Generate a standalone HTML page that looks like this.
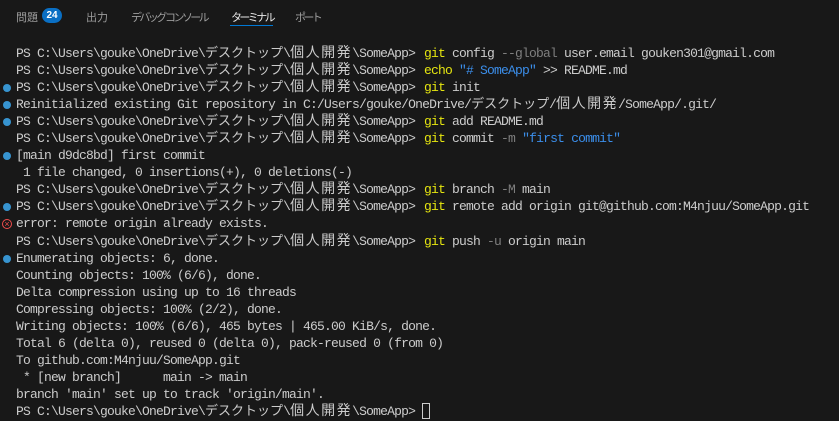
<!DOCTYPE html>
<html><head><meta charset="utf-8"><style>
html,body{margin:0;padding:0;background:#181818;width:839px;height:421px;overflow:hidden;position:relative}
.tab{position:absolute;top:9px;font:11px "Liberation Sans","Noto Sans CJK JP",sans-serif;color:#9d9d9d;white-space:nowrap}
.kt{letter-spacing:-2.6px}
.l{position:absolute;left:16px;height:17px;line-height:17px;white-space:pre;font:13px/17px "Liberation Mono","Noto Sans CJK JP",monospace;color:#cccccc;letter-spacing:-0.8px}
.j{font-size:13px;letter-spacing:0}
.k{font-size:14px;letter-spacing:1.5px}
.c{position:absolute;left:408px;white-space:pre}
.y{color:#e5e510}.g{color:#7f7f7f}.b{color:#3b8eea}
.dot{position:absolute;left:3px;width:8px;height:8px;border-radius:50%;background:#3794d0}
.err{position:absolute;left:2px;width:8px;height:8px;border:1.3px solid #f14c4c;border-radius:50%;color:#f14c4c;font:9px/8px "Liberation Sans",sans-serif;text-align:center}
</style></head><body>
<div class="tab" style="left:16px">問題</div>
<div style="position:absolute;left:42px;top:8px;width:20px;height:15px;border-radius:8px;background:#0a6fc4;color:#fff;font:bold 10px/15px 'Liberation Sans',sans-serif;text-align:center">24</div>
<div class="tab" style="left:86px">出力</div>
<div class="tab kt" style="left:131px">デバッグ コンソール</div>
<div class="tab kt" style="left:231px;color:#e7e7e7">ターミナル</div>
<div style="position:absolute;left:230px;top:25px;width:43px;height:1px;background:#0078d4"></div>
<div class="tab kt" style="left:295px">ポート</div>

<div class="l" style="top:45px">PS C:\Users\gouke\OneDrive\<span class="j">デスクトップ</span>\<span class="k">個人開発</span>\SomeApp&gt;<span class="c"><span class="y">git</span> config <span class="g">--global</span> user.email gouken301@gmail.com</span></div>
<div class="l" style="top:62px">PS C:\Users\gouke\OneDrive\<span class="j">デスクトップ</span>\<span class="k">個人開発</span>\SomeApp&gt;<span class="c"><span class="y">echo</span> <span class="b">"# SomeApp"</span> &gt;&gt; README.md</span></div>
<div class="dot" style="top:84px"></div>
<div class="l" style="top:79px">PS C:\Users\gouke\OneDrive\<span class="j">デスクトップ</span>\<span class="k">個人開発</span>\SomeApp&gt;<span class="c"><span class="y">git</span> init</span></div>
<div class="dot" style="top:101px"></div>
<div class="l" style="top:96px">Reinitialized existing Git repository in C:/Users/gouke/OneDrive/<span class="j">デスクトップ</span>/<span class="k">個人開発</span>/SomeApp/.git/</div>
<div class="dot" style="top:118px"></div>
<div class="l" style="top:113px">PS C:\Users\gouke\OneDrive\<span class="j">デスクトップ</span>\<span class="k">個人開発</span>\SomeApp&gt;<span class="c"><span class="y">git</span> add README.md</span></div>
<div class="l" style="top:130px">PS C:\Users\gouke\OneDrive\<span class="j">デスクトップ</span>\<span class="k">個人開発</span>\SomeApp&gt;<span class="c"><span class="y">git</span> commit <span class="g">-m</span> <span class="b">"first commit"</span></span></div>
<div class="dot" style="top:152px"></div>
<div class="l" style="top:147px">[main d9dc8bd] first commit</div>
<div class="l" style="top:164px"> 1 file changed, 0 insertions(+), 0 deletions(-)</div>
<div class="l" style="top:181px">PS C:\Users\gouke\OneDrive\<span class="j">デスクトップ</span>\<span class="k">個人開発</span>\SomeApp&gt;<span class="c"><span class="y">git</span> branch <span class="g">-M</span> main</span></div>
<div class="dot" style="top:203px"></div>
<div class="l" style="top:198px">PS C:\Users\gouke\OneDrive\<span class="j">デスクトップ</span>\<span class="k">個人開発</span>\SomeApp&gt;<span class="c"><span class="y">git</span> remote add origin git@github.com:M4njuu/SomeApp.git</span></div>
<div class="err" style="top:219px">×</div>
<div class="l" style="top:215px">error: remote origin already exists.</div>
<div class="l" style="top:233px">PS C:\Users\gouke\OneDrive\<span class="j">デスクトップ</span>\<span class="k">個人開発</span>\SomeApp&gt;<span class="c"><span class="y">git</span> push <span class="g">-u</span> origin main</span></div>
<div class="dot" style="top:255px"></div>
<div class="l" style="top:250px">Enumerating objects: 6, done.</div>
<div class="l" style="top:267px">Counting objects: 100% (6/6), done.</div>
<div class="l" style="top:284px">Delta compression using up to 16 threads</div>
<div class="l" style="top:301px">Compressing objects: 100% (2/2), done.</div>
<div class="l" style="top:318px">Writing objects: 100% (6/6), 465 bytes | 465.00 KiB/s, done.</div>
<div class="l" style="top:335px">Total 6 (delta 0), reused 0 (delta 0), pack-reused 0 (from 0)</div>
<div class="l" style="top:352px">To github.com:M4njuu/SomeApp.git</div>
<div class="l" style="top:369px"> * [new branch]      main -&gt; main</div>
<div class="l" style="top:386px">branch 'main' set up to track 'origin/main'.</div>
<div class="l" style="top:403px">PS C:\Users\gouke\OneDrive\<span class="j">デスクトップ</span>\<span class="k">個人開発</span>\SomeApp&gt;</div>
<div style="position:absolute;left:422px;top:403px;width:6px;height:14px;border:1px solid #cccccc"></div>
</body></html>
